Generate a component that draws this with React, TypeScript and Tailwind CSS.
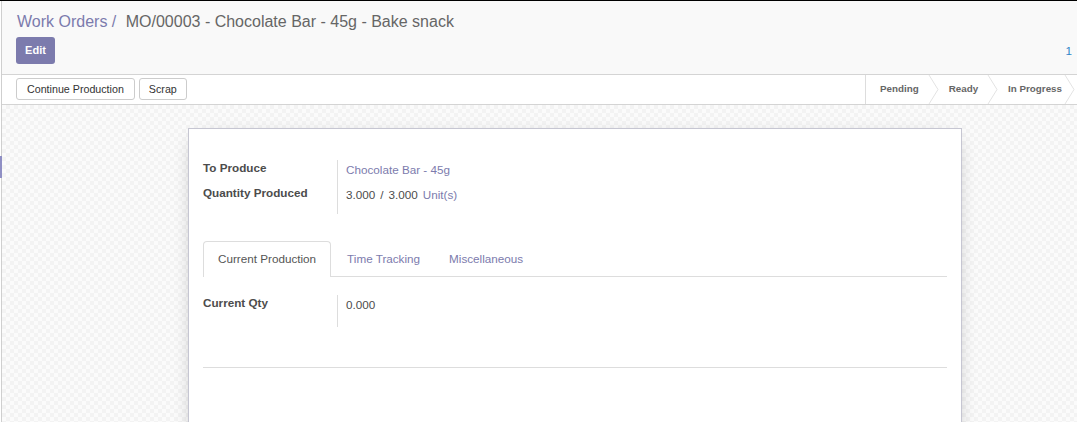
import React from "react";

export default function App() {
  return (
    <div className="relative h-[422px] w-[1077px] overflow-hidden border-t border-black bg-white pl-px font-['Liberation_Sans',Arial,sans-serif]">
      <div className="absolute left-0 top-[155px] h-[22px] w-[2px] bg-[#8f8fc4]" />
      <div className="flex h-full flex-col border-l border-[#cfcfcf]">
        {/* Control panel */}
        <div className="h-[74px] shrink-0 border-b border-[#d4d4d4] bg-[#f9f9f9] px-[14px] pt-[9px]">
          <div className="whitespace-nowrap pl-px text-[16px] leading-[23px] text-[#666666]">
            <span className="text-[#7c7bad]">Work Orders</span>
            <span className="text-[#7c7bad]"> / </span>
            <span className="ml-[5px]">MO/00003 - Chocolate Bar - 45g - Bake snack</span>
          </div>
          <div className="mt-[4px] flex items-center justify-between">
            <button className="h-[27px] w-[39px] rounded-[3px] bg-[#7c7bad] text-[11px] font-bold text-white">
              Edit
            </button>
            <span className="-mr-[9px] text-[11.7px] text-[#2f86c8]">1</span>
          </div>
        </div>

        {/* Status bar */}
        <div className="flex h-[30px] shrink-0 items-start justify-between border-b border-[#d4d4d4] bg-white pl-[14px]">
          <div className="flex gap-[4px] pt-[3px]">
            <button className="h-[22px] rounded-[3px] border border-[#cccccc] bg-white px-[10px] text-[10.7px] text-[#333333]">
              Continue Production
            </button>
            <button className="h-[22px] rounded-[3px] border border-[#cccccc] bg-white px-[9px] text-[10.7px] text-[#333333]">
              Scrap
            </button>
          </div>
          <div className="flex h-[29px] items-stretch border-l border-[#dddddd] text-[9.8px] font-bold text-[#666666]">
            <Stage label="Pending" padL="pl-[14px]" gap="w-[30px]" />
            <Stage label="Ready" padL="pl-[0px]" gap="w-[30px]" />
            <Stage label="In Progress" padL="pl-[0px]" gap="w-[15px]" />
          </div>
        </div>

        {/* Content */}
        <div className="flex-1 bg-[image:repeating-conic-gradient(#f3f3f3_0%_25%,#fbfbfb_0%_50%)] bg-[length:8px_8px] pt-[23px]">
          <div className="ml-[186px] h-[400px] w-[774px] border border-[#c6c6d2] bg-white px-[14px] pt-[31px] text-[11.7px] leading-[16px] text-[#4c4c4c] shadow-[0_5px_20px_-10px_rgba(0,0,0,0.45)]">
            {/* Group */}
            <div className="flex">
              <div className="w-[135px] border-r border-[#dddddd] pb-[4px] font-bold">
                <div className="h-[25px]">To Produce</div>
                <div className="h-[25px]">Quantity Produced</div>
              </div>
              <div className="pl-[8px] pt-[2px]">
                <div className="h-[25px] text-[#7c7bad]">Chocolate Bar - 45g</div>
                <div className="h-[25px]">
                  3.000<span className="mx-[5px]">/</span>3.000
                  <span className="ml-[5px] text-[#7c7bad]">Unit(s)</span>
                </div>
              </div>
            </div>

            {/* Tabs */}
            <div className="mt-[27px] flex border-b border-[#dddddd]">
              <div className="-mb-px mr-[2px] rounded-t-[4px] border border-b-0 border-[#dddddd] bg-white px-[14px] pb-[10px] pt-[9px] text-[#555555]">
                Current Production
              </div>
              <div className="mr-[1px] px-[14px] pb-[9px] pt-[10px] text-[#7c7bad]">Time Tracking</div>
              <div className="px-[14px] pb-[9px] pt-[10px] text-[#7c7bad]">Miscellaneous</div>
            </div>

            <div className="mt-[18px] flex">
              <div className="w-[135px] border-r border-[#dddddd] pb-[7px] font-bold">
                <div className="h-[25px]">Current Qty</div>
              </div>
              <div className="pl-[8px] pt-[2px]">
                <div className="h-[25px]">0.000</div>
              </div>
            </div>

            <div className="mt-[40px] border-t border-[#dddddd]" />
          </div>
        </div>
      </div>
    </div>
  );
}

function Stage({ label, padL, gap }: { label: string; padL: string; gap: string }) {
  return (
    <div className={`flex items-center ${padL}`}>
      <span className="whitespace-nowrap">{label}</span>
      <div className={`flex h-full justify-center ${gap}`}>
        <svg width="12" height="29" viewBox="0 0 12 29" className="shrink-0">
          <polyline points="1,0 10,14.5 1,29" fill="none" stroke="#e3e3e3" strokeWidth="1" />
        </svg>
      </div>
    </div>
  );
}
